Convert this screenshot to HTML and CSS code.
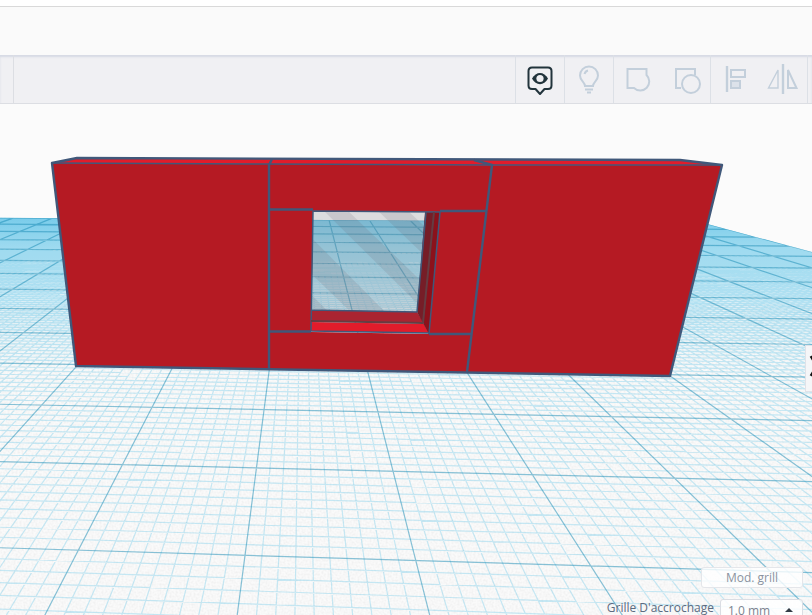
FILE: index.html
```html
<!DOCTYPE html>
<html lang="fr">
<head>
<meta charset="utf-8">
<title>Plan de travail</title>
<link rel="stylesheet" href="styles.css">
</head>
<body>
<header class="topbar"></header>
<nav class="toolbar" aria-label="Outils">
  <div class="tools-left"></div>
  <div class="tool-group">
    <button class="tool active" aria-label="Tout afficher">
      <svg width="48" height="48" viewBox="0 0 48 48"><path d="M16 12.500h16q3.500 0 3.500 3.500v14.500q0 3.500-3.500 3.500h-3.500l-4.500 5-4.500-5h-3.500q-3.500 0-3.500-3.500v-14.500q0-3.500 3.500-3.500z" fill="none" stroke="#22343c" stroke-width="2" stroke-linejoin="round"/><path d="M16 23.500c4-7.500 12-7.500 16 0-4 7.500-12 7.500-16 0z" fill="#22343c"/><ellipse cx="24" cy="23.500" rx="3.600" ry="3.600" fill="#f0f0f3"/></svg>
    </button>
  </div>
  <div class="tool-group">
    <button class="tool" aria-label="Lumière">
      <svg width="48" height="48" viewBox="0 0 48 48"><path d="M20 31c0-4-5-5-5-10.500a9 9 0 0 1 18 0c0 5.500-5 6.500-5 10.500zM19.500 19q1-3 3.500-3.500"/><path d="M20 34.500h8M22 37.500h4"/></svg>
    </button>
  </div>
  <div class="tool-group">
    <button class="tool" aria-label="Regrouper">
      <svg width="48" height="48" viewBox="0 0 48 48"><path d="M13.500 14h19v6a9 9 0 1 1-12.500 13h-6.500z"/></svg>
    </button>
    <button class="tool" aria-label="Dissocier">
      <svg width="48" height="48" viewBox="0 0 48 48"><path d="M19 33h-5v-19h19v6"/><circle cx="29" cy="29" r="9"/></svg>
    </button>
  </div>
  <div class="tool-group last">
    <button class="tool" aria-label="Aligner">
      <svg width="48" height="48" viewBox="0 0 48 48"><path d="M16 11v26" stroke-width="2.400"/><path d="M20 15h14v7h-14z"/><path d="M20 26h9v7h-9z" fill="#dce2ea"/></svg>
    </button>
    <button class="tool" aria-label="Symétrie">
      <svg width="48" height="48" viewBox="0 0 48 48"><path d="M24 9v30" stroke-width="2.400"/><path d="M19 15v18h-9.500z" stroke-width="1.400"/><path d="M29 15v18h8.500z"/></svg>
    </button>
  </div>
</nav>
<main class="stage">
  <svg class="scene" viewBox="0 0 812 511" preserveAspectRatio="xMidYMin slice" role="img" aria-label="Bloc rouge sur le plan de travail">
    <defs>
      <filter id="paper" x="0" y="0" width="100%" height="100%">
        <feTurbulence type="fractalNoise" baseFrequency="0.5" numOctaves="2" seed="3"/>
        <feColorMatrix values="0 0 0 0 0.4  0 0 0 0 0.4  0 0 0 0 0.4  0.250 0 0 0 -0.090"/>
      </filter>
      <linearGradient id="haze" x1="0" y1="113" x2="0" y2="270" gradientUnits="userSpaceOnUse">
        <stop offset="0" stop-color="#3cb4e2" stop-opacity=".55"/>
        <stop offset=".2" stop-color="#4cbde6" stop-opacity=".3"/>
        <stop offset="1" stop-color="#6ccbee" stop-opacity="0"/>
      </linearGradient>
      <clipPath id="floor-clip"><path id="floor-shape"/></clipPath>
      <clipPath id="hole-clip"><path d="M313 107L426 108 417 208 311 206z"/></clipPath>
    </defs>
    <path id="floor" fill="#fafafa"/>
    <g clip-path="url(#floor-clip)">
      <rect y="200" width="812" height="311" filter="url(#paper)"/>
      <rect y="110" width="812" height="160" fill="url(#haze)"/>
      <path id="minor" class="minor"/>
      <path id="major" class="major"/>
    </g>
    <g clip-path="url(#hole-clip)">
      <rect x="305" y="100" width="130" height="115" fill="#7a7a80" opacity=".24"/>
      <path d="M322 105h24l115 110h-28zM376 105h30l60 56v30zM290 112l102 103h-34l-68-66zM290 170l46 45h-40z" fill="#6c6470" opacity=".16"/>
    </g>
    <path fill="#b51a23" fill-rule="evenodd" d="M52 59L269 60 492 61 722 61 670 272 76 262zM313 107L311 228 429 230 440 108z"/>
    <path fill="#e11c2b" d="M52 59L77 54 684 56 722 61 492 62 269 60z"/>
    <path fill="#aa2431" d="M311 206L417 208 424 219 311 217z"/>
    <path fill="#e11c2b" d="M311 218L424 220 429 229 311 227z"/>
    <path fill="#761d27" d="M425 108L440 108 429 230 417 208z"/>
    <path fill="#8c111b" d="M435 108L440 108 429 230 424 218z"/>
    <g class="edges">
      <path d="M52 59L77 54 680 56 722 61 670 272 76 262z"/>
      <path d="M52 59L269 60 492 61 722 61" stroke-width="1.500"/>
      <path d="M272 55L269 61V265M474 56L492 61 467 268"/>
      <path d="M269 105.500H313M311 227.500H269M440 107H486M429 230H471" stroke-width="2.500"/>
      <path d="M313 107L440 108 429 230M313 107L311 227L429 229M311 206L417 208 426 108" stroke-width="1.500"/>
      <path d="M311 217L423 219 434 108" stroke="#653c42" stroke-width="2"/>
    </g>
  </svg>
  <button class="panel-toggle" aria-label="Ouvrir le panneau"><svg width="16" height="24" viewBox="0 0 16 24"><path d="M5 2l6 10-6 10" fill="none" stroke="#111" stroke-width="3"/></svg></button>
  <form class="grid-settings">
    <button type="button" class="edit-grid">Mod. grill</button>
    <label for="snap">Grille D'accrochage</label>
    <div class="snap-box"><select id="snap"><option>1.0 mm</option></select></div>
  </form>
</main>
<script src="scene.js"></script>
</body>
</html>
```
FILE: styles.css
```css
* { box-sizing: border-box; }
body {
  margin: 0;
  height: 100vh;
  display: flex;
  flex-direction: column;
  overflow: hidden;
  background: #fbfbfb;
  font-family: "Open Sans", "Noto Sans", sans-serif;
  color: #5c6b80;
}
button { font: inherit; color: inherit; padding: 0; border: 0; background: none; }
.topbar {
  flex: none;
  height: 55px;
  border-top: 6px solid #fff;
  background: #fafafa;
  box-shadow: inset 0 1px #d9d9d9;
}
.toolbar {
  flex: none;
  display: flex;
  height: 49px;
  background: #f0f0f3;
  border-bottom: 1px solid #dcdee3;
  box-shadow: inset 0 2px 2px #d6dae4;
}
.tools-left { flex: 1; margin-left: 13px; border-left: 1px solid #dcdee3; }
.tool-group { display: flex; border-left: 1px solid #dce0e6; }
.tool-group.last { border-right: 1px solid #dce0e6; margin-right: 4px; }
.tool { width: 48px; height: 48px; }
.tool svg { display: block; fill: none; stroke: #c3cfdb; stroke-width: 2; }
.tool.active svg { stroke: none; }
.stage { position: relative; flex: 1; min-height: 0; }
.scene { display: block; width: 100%; height: 100%; }
.minor { fill: none; stroke: #2bb4e4; stroke-opacity: .25; stroke-width: 1.2; }
.major { fill: none; stroke: #1689b4; stroke-opacity: .5; stroke-width: 1.2; }
.edges { fill: none; stroke: #40587a; stroke-width: 2.4; stroke-linejoin: round; }
.panel-toggle {
  position: absolute;
  top: 241px;
  right: -9px;
  width: 16px;
  height: 47px;
  background: #f5f6f8;
  border: 1px solid #e0e2e8;
}
.grid-settings {
  position: absolute;
  right: 9px;
  bottom: -7px;
  display: grid;
  grid-template-columns: auto 83px;
  column-gap: 6px;
  row-gap: 11px;
  align-items: start;
  font: 12px/18px "Open Sans", "Noto Sans", sans-serif;
}
.edit-grid {
  grid-column: 1 / -1;
  justify-self: end;
  width: 102px;
  height: 21px;
  border: 1px solid #e4e6ea;
  border-radius: 3px;
  background: rgba(255, 255, 255, .8);
  color: #8b93a0;
}
.snap-box {
  position: relative;
  height: 23px;
  border: 1px solid #dadde3;
  border-radius: 3px;
  background: rgba(255, 255, 255, .85);
}
.snap-box::after {
  content: "";
  position: absolute;
  right: 9px;
  top: 8px;
  border: 4px solid transparent;
  border-top: 0;
  border-bottom: 4px solid #333c46;
}
.snap-box select {
  display: block;
  appearance: none;
  width: 100%;
  height: 100%;
  padding: 0 7px;
  border: 0;
  background: none;
  font: inherit;
  color: #7c8390;
}
```
FILE: scene.js
```js
// Reference points of the workplane: [column, row, x, y].
const anchors = [
  [0, 0, 76, 262], [2, 0, 268, 265], [4, 0, 466, 268], [6, 0, 670, 272],
  [0, 1, 43, 301], [2, 1, 264, 305], [4, 1, 494, 310], [6, 1, 730, 314],
  [1, 2, 122, 361], [2, 2, 256, 364], [4, 2, 533, 370], [5, 2, 675, 374],
  [1, 3, 79, 446], [2, 3, 246, 451], [3, 3, 416, 456], [4, 3, 591, 461],
  [-2, -4, 39, 169], [8, -1, 802, 240]
];

// Least-squares fit of the perspective that carries the grid to the view.
function fitPerspective(points) {
  const m = Array.from({ length: 8 }, () => new Array(9).fill(0));
  const add = (row) => {
    for (let i = 0; i < 8; i++) for (let j = 0; j < 9; j++) m[i][j] += row[i] * row[j];
  };
  for (const [u, v, x, y] of points) {
    add([u, v, 1, 0, 0, 0, -u * x, -v * x, x]);
    add([0, 0, 0, u, v, 1, -u * y, -v * y, y]);
  }
  for (let c = 0; c < 8; c++) {
    let p = c;
    for (let r = c + 1; r < 8; r++) if (Math.abs(m[r][c]) > Math.abs(m[p][c])) p = r;
    [m[c], m[p]] = [m[p], m[c]];
    for (let r = 0; r < 8; r++) {
      if (r === c) continue;
      const f = m[r][c] / m[c][c];
      for (let k = c; k < 9; k++) m[r][k] -= f * m[c][k];
    }
  }
  return m.map((row, i) => row[8] / row[i]);
}

const h = fitPerspective(anchors);
const at = (u, v) => {
  const w = h[6] * u + h[7] * v + 1;
  return ((h[0] * u + h[1] * v + h[2]) / w).toFixed(2) + " " + ((h[3] * u + h[4] * v + h[5]) / w).toFixed(2);
};
const left = -8, right = 12, back = -10, front = 4.4;
const lines = { minor: "", major: "" };
for (let i = left * 10; i <= right * 10; i++) {
  lines[i % 10 ? "minor" : "major"] += `M${at(i / 10, back)}L${at(i / 10, front)}`;
}
for (let i = back * 10; i <= front * 10; i++) {
  lines[i % 10 ? "minor" : "major"] += `M${at(left, i / 10)}L${at(right, i / 10)}`;
}
const outline = `M${at(left, back)}L${at(right, back)}L${at(right, front)}L${at(left, front)}z`;
document.getElementById("minor").setAttribute("d", lines.minor);
document.getElementById("major").setAttribute("d", lines.major);
document.getElementById("floor").setAttribute("d", outline);
document.getElementById("floor-shape").setAttribute("d", outline);
```
